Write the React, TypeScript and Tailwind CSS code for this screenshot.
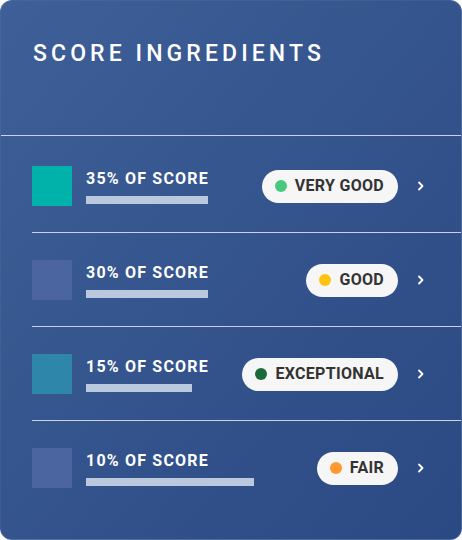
import React from "react";

type Row = {
  pct: string;
  square: string;
  bar: number;
  rating: string;
  dot: string;
  pt: string;
};

const rows: Row[] = [
  { pct: "35% OF SCORE", square: "bg-[#00b2a9]", bar: 122, rating: "VERY GOOD", dot: "bg-[#48c97e]", pt: "pt-[30px]" },
  { pct: "30% OF SCORE", square: "bg-[#4a65a0]", bar: 122, rating: "GOOD", dot: "bg-[#ffc20e]", pt: "pt-[27px]" },
  { pct: "15% OF SCORE", square: "bg-[#2e86aa]", bar: 106, rating: "EXCEPTIONAL", dot: "bg-[#1c6a3b]", pt: "pt-[27px]" },
  { pct: "10% OF SCORE", square: "bg-[#4a65a0]", bar: 168, rating: "FAIR", dot: "bg-[#ff9a30]", pt: "pt-[27px]" },
];

function Chevron() {
  return (
    <svg width="8" height="10" viewBox="0 0 8 10" className="shrink-0">
      <path d="M2 1.5 L5.5 5 L2 8.5" fill="none" stroke="white" strokeWidth="1.8" strokeLinecap="round" strokeLinejoin="round" />
    </svg>
  );
}

export default function App() {
  return (
    <div className="w-[462px] h-[540px] bg-white" style={{ fontFamily: "Roboto, 'Liberation Sans', sans-serif" }}>
      <div className="w-[462px] h-[540px] rounded-[12px] overflow-hidden bg-gradient-to-br from-[#3e5f97] to-[#2b4983] border border-white/10 flex flex-col">
        <div className="h-[135px] shrink-0 border-b border-[#c9d2e3] pt-[39px] pl-[32px]">
          <div className="text-white text-[23px] leading-[28px] font-medium tracking-[4.1px]">SCORE INGREDIENTS</div>
        </div>
        {rows.map((r, i) => (
          <div
            key={i}
            className={`ml-[31px] ${r.pt} pb-[26px] flex items-center ${i < rows.length - 1 ? "border-b border-[#c9d2e3]" : ""}`}
          >
            <div className={`w-[40px] h-[40px] shrink-0 ${r.square}`} />
            <div className="ml-[14px] flex-1 flex flex-col">
              <div className="text-white text-[16px] leading-[20px] font-bold tracking-[1.2px]">{r.pct}</div>
              <div className="mt-[7px] h-[8px] bg-[#bbc9df]" style={{ width: r.bar }} />
            </div>
            <div className="h-[33px] rounded-full bg-[#f6f6f6] flex items-center pl-[13px] pr-[14px] gap-[8px]">
              <div className={`w-[12px] h-[12px] rounded-full ${r.dot}`} />
              <span className="text-[#333333] text-[16px] font-bold tracking-[0.3px] leading-none">{r.rating}</span>
            </div>
            <div className="ml-[19px] mr-[36px] flex items-center">
              <Chevron />
            </div>
          </div>
        ))}
      </div>
    </div>
  );
}
